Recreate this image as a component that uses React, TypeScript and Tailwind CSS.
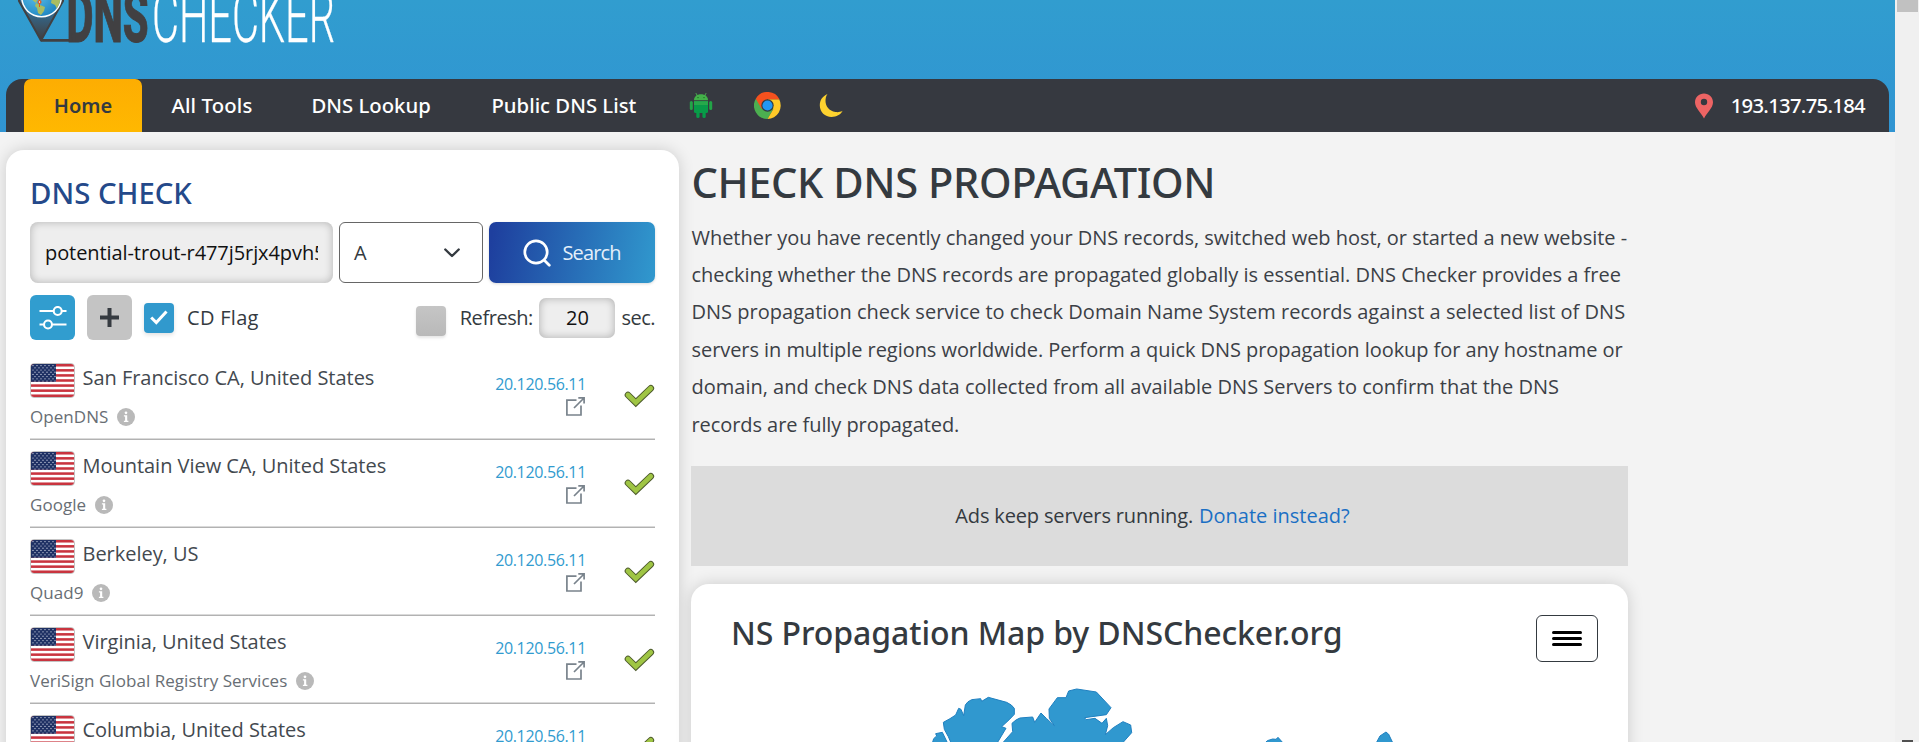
import type { ReactNode } from 'react';

type Server = { city: string; provider: string };

const servers: Server[] = [
  { city: 'San Francisco CA, United States', provider: 'OpenDNS' },
  { city: 'Mountain View CA, United States', provider: 'Google' },
  { city: 'Berkeley, US', provider: 'Quad9' },
  { city: 'Virginia, United States', provider: 'VeriSign Global Registry Services' },
  { city: 'Columbia, United States', provider: 'Speakeasy' },
];

function Logo() {
  return (
    <svg className="block" width="340" height="50" viewBox="0 0 340 50">
      <defs>
        <linearGradient id="pin" x1="0" y1="0" x2="0" y2="1">
          <stop offset="0.45" stopColor="#33688c" />
          <stop offset="0.95" stopColor="#414042" />
        </linearGradient>
        <radialGradient id="sea" cx="0.35" cy="0.4" r="0.8">
          <stop offset="0" stopColor="#5cc3ee" />
          <stop offset="1" stopColor="#1479b8" />
        </radialGradient>
        <clipPath id="globe">
          <circle cx="41.5" cy="-3" r="19" />
        </clipPath>
      </defs>
      <path d="M18 -8 L19 1 L41 40.500 L63 1 L63 -8 Z" fill="url(#pin)" stroke="#414042" strokeWidth="2" strokeLinejoin="round" />
      <path d="M41 40.400 H74" stroke="#414042" strokeWidth="2.600" />
      <circle cx="41.500" cy="-3" r="20.500" fill="#fff" />
      <circle cx="41.500" cy="-3" r="19" fill="url(#sea)" />
      <g clipPath="url(#globe)" fill="#a9bd62">
        <path d="M33 -3 L37 0 L36 3 L40 5 L45 7 L44 11 L41 15 L38 13 L37 8 L35 6 L36 3 L30 -2 Z" />
        <path d="M52 -3 L61 -3 L60 7 L57 9 L55 5 L51 3 Z" />
      </g>
      <circle cx="39.500" cy="2" r="1.400" fill="#fff" stroke="#e2571f" strokeWidth="1.300" />
      <path d="M39.500 3 V7" stroke="#e2571f" strokeWidth="1" />
      <text x="66.500" y="41.500" fontFamily="Roboto" fontWeight="800" fontSize="73" fill="#414042" stroke="#414042" strokeWidth="1" textLength="82" lengthAdjust="spacingAndGlyphs">DNS</text>
      <text x="152" y="41.500" fontFamily="Roboto" fontWeight="300" fontSize="73" fill="#fff" stroke="#fff" strokeWidth="0.300" textLength="183" lengthAdjust="spacingAndGlyphs">CHECKER</text>
    </svg>
  );
}

function AndroidIcon() {
  return (
    <svg width="24" height="27" viewBox="0 0 24 27">
      <path d="M8.500 4 L6.800 1 M15.500 4 L17.200 1" stroke="#4caf50" strokeWidth="0.900" />
      <path d="M5 8.200 C5 4.300 8 2.200 12 2.200 S19 4.300 19 8.200 Z" fill="#43b049" />
      <circle cx="9" cy="5.600" r="0.700" fill="#1b5e20" />
      <circle cx="15" cy="5.600" r="0.700" fill="#1b5e20" />
      <rect x="0.800" y="9" width="3" height="9" rx="1.500" fill="#22a447" />
      <rect x="20.200" y="9" width="3" height="9" rx="1.500" fill="#22a447" />
      <path d="M5 9.200 H19 V19.500 Q19 21 17.500 21 H6.500 Q5 21 5 19.500 Z" fill="#089b48" />
      <path d="M5 9.200 H19 V13 H5 Z" fill="#27a94b" />
      <rect x="7.300" y="19" width="3.300" height="7" rx="1.600" fill="#089b48" />
      <rect x="13.400" y="19" width="3.300" height="7" rx="1.600" fill="#089b48" />
    </svg>
  );
}

function ChromeIcon() {
  return (
    <svg width="27" height="27" viewBox="0 0 48 48">
      <path d="M24 24 L3.200 12 A24 24 0 0 0 24 48 L34.400 30 Z" fill="#4caf50" />
      <path d="M24 13 H44.800 A24 24 0 0 1 24 48 L34.400 30 Z" fill="#ffc928" />
      <path d="M24 13 H45.400 A24 24 0 0 0 3.200 12 L13.600 30 Z" fill="#f4511e" />
      <circle cx="24" cy="24" r="11" fill="#343a40" />
      <circle cx="24" cy="24" r="9" fill="#2196f3" />
    </svg>
  );
}

function MoonIcon() {
  return (
    <svg width="24" height="25" viewBox="0 0 24 25">
      <path d="M8.500 1 C3 3.500 0.800 7.500 0.800 12.500 C0.800 19 6 24 12.500 24 C17.500 24 21.500 21.800 23.600 17.800 C21 19.300 18.500 19.300 16.500 19 C10 18 6.500 13 6.500 8 C6.500 5.500 7 3 8.500 1 Z" fill="#fdd22f" />
    </svg>
  );
}

function PinIcon() {
  return (
    <svg width="18" height="26" viewBox="0 0 18 26">
      <path fillRule="evenodd" d="M9 0.500 C4 0.500 0 4.300 0 9.200 C0 15 6 19.500 9 25.500 C12 19.500 18 15 18 9.200 C18 4.300 14 0.500 9 0.500 Z M9 5.800 A3.200 3.200 0 1 1 9 12.200 A3.200 3.200 0 1 1 9 5.800 Z" fill="#ed6464" />
    </svg>
  );
}

function Flag() {
  const stripes = [0, 2, 4, 6, 8, 10, 12];
  const stars: ReactNode[] = [];
  for (let r = 0; r < 8; r++) {
    for (let c = 0; c < 6; c++) {
      stars.push(<circle key={`${r}-${c}`} cx={2 + c * 4 + (r % 2) * 2} cy={1.6 + r * 2.2} r="0.62" fill="#dfe3ee" />);
    }
  }
  return (
    <span className="block h-[35px] w-[45px] shrink-0 overflow-hidden rounded-[4px] border border-[#c4c4c4] bg-white">
      <svg className="block" width="43" height="33" viewBox="0 0 43 33">
        {stripes.map((i) => (
          <rect key={i} x="0" y={(i * 33) / 13} width="43" height={33 / 13} fill="#c9343f" />
        ))}
        <rect width="25" height="17.8" fill="#1f3164" />
        {stars}
      </svg>
    </span>
  );
}

function InfoIcon() {
  return (
    <svg width="18" height="18" viewBox="0 0 18 18">
      <circle cx="9" cy="9" r="9" fill="#b9b9b9" />
      <path d="M6.900 7.300 H10.200 V12.700 H11.400 V13.900 H6.900 V12.700 H8.100 V8.500 H6.900 Z" fill="#fff" />
      <circle cx="9" cy="4.800" r="1.350" fill="#fff" />
    </svg>
  );
}

function ExternalIcon() {
  return (
    <svg width="19" height="19" viewBox="0 0 19 19" fill="none" stroke="#79838c" strokeWidth="1.700">
      <path d="M10.500 3.200 H0.900 V18 H15 V8.500" />
      <path d="M8 11 L17.500 1.500 M12.300 0.900 H18.100 V6.600" />
    </svg>
  );
}

function CheckIcon() {
  return (
    <svg className="block" width="31" height="24" viewBox="0 0 31 24">
      <path d="M4 11 L11.800 18.600 L26.800 4.300" fill="none" stroke="#4d5a2c" strokeWidth="6.600" strokeLinecap="round" />
      <path d="M4 11 L11.800 18.600 L26.800 4.300" fill="none" stroke="#9fc544" strokeWidth="4.700" strokeLinecap="round" />
    </svg>
  );
}

function ServerRow({ city, provider }: Server) {
  return (
    <li className="flex h-[88.1px] shrink-0 justify-between border-b border-[#b2b2b2] shadow-[inset_0_-1px_0_#dadada]">
      <div className="flex flex-col pt-[11px]">
        <div className="flex items-start gap-[7.500px]">
          <Flag />
          <span className="text-[20px] leading-[30px] tracking-[-0.03px] text-[#43494f]">{city}</span>
        </div>
        <div className="mt-[7px] flex items-center gap-[8.500px]">
          <span className="text-[17px] leading-[24px] tracking-[0.04px] text-[#686e74]">{provider}</span>
          <InfoIcon />
        </div>
      </div>
      <div className="flex items-start gap-[37.500px]">
        <div className="flex flex-col items-end pt-5">
          <a className="text-[16px] leading-6 tracking-[-0.34px] text-[#319bcf]">20.120.56.11</a>
          <span className="mt-[1px] mr-[1.500px]"><ExternalIcon /></span>
        </div>
        <span className="pt-[32px] pr-[0.500px]"><CheckIcon /></span>
      </div>
    </li>
  );
}

function Header() {
  return (
    <header className="flex h-[132px] flex-col bg-linear-to-b from-[#319dcf] to-[#3094d2] px-[6px]">
      <div className="h-[79px]">
        <div className="-ml-[6px]"><Logo /></div>
      </div>
      <nav className="flex h-[53px] items-stretch rounded-t-[16px] bg-[#363940] pr-6 pl-[18px] font-['Noto_Sans'] text-[20.300px] font-medium text-white">
        <a className="flex w-[118px] items-center justify-center rounded-t-[7px] bg-linear-to-b from-[#fdad02] to-[#ffb800] text-[20px] font-semibold text-[#343a40]">Home</a>
        <a className="flex w-[140px] items-center pl-[29.500px] tracking-[0.15px]">All Tools</a>
        <a className="flex w-[180px] items-center pl-[29.500px]">DNS Lookup</a>
        <a className="flex w-[198px] items-center pl-[29.500px]">Public DNS List</a>
        <div className="flex items-center gap-[42px] pl-[29px]">
          <AndroidIcon />
          <span className="-ml-[1px]"><ChromeIcon /></span>
          <span className="-ml-[4.500px]"><MoonIcon /></span>
        </div>
        <div className="ml-auto flex items-center gap-[18px]">
          <PinIcon />
          <span className="tracking-[-0.700px]">193.137.75.184</span>
        </div>
      </nav>
    </header>
  );
}

function SearchPanel() {
  return (
    <section className="flex h-[700px] w-[673px] shrink-0 flex-col rounded-[18px] bg-white px-6 shadow-[0_0_16px_rgba(0,0,0,0.16)]">
      <h2 className="mt-[23px] h-[41px] font-['Noto_Sans'] text-[29.300px] leading-[40px] font-medium text-[#24498a]">DNS CHECK</h2>
      <div className="mt-2 flex h-[61px] gap-[6px]">
        <div className="flex w-[303px] items-center rounded-[8px] bg-[#eee] px-[15px] shadow-[inset_0_0_9px_rgba(0,0,0,0.25)]">
          <span className="w-full overflow-hidden text-[20px] leading-8 tracking-[-0.08px] whitespace-nowrap text-[#111]">potential-trout-r477j5rjx4pvh5</span>
        </div>
        <div className="flex w-[144px] items-center justify-between rounded-[6px] border border-[#666] bg-white pr-[22px] pl-[14px] text-[20px] text-[#343a40]">
          <span>A</span>
          <svg width="16" height="10" viewBox="0 0 16 10" fill="none" stroke="#343a40" strokeWidth="2.400" strokeLinecap="round" strokeLinejoin="round">
            <path d="M1.300 1.500 L8 8 L14.700 1.500" />
          </svg>
        </div>
        <button className="flex w-[166px] items-center rounded-[7px] bg-[linear-gradient(100deg,#1e3f9e_3%,#3097cd_98%)] pl-[33.500px] text-[20px] text-[#e4effa] shadow-[0_1px_3px_rgba(0,0,0,0.15)]">
          <svg width="28" height="28" viewBox="0 0 28 28" fill="none" stroke="#fff" strokeWidth="2.700" strokeLinecap="round">
            <circle cx="13" cy="13" r="11.200" />
            <path d="M21.300 21.300 L26.300 26.300" />
          </svg>
          <span className="ml-[12px] tracking-[-0.850px]">Search</span>
        </button>
      </div>
      <div className="mt-3 flex h-[45px] items-center text-[20px] text-[#343a40]">
        <button className="flex size-[45px] items-center justify-center rounded-[6px] bg-[#319dcf]">
          <svg width="28" height="24" viewBox="0 0 28 24" fill="none" stroke="#fff" strokeWidth="2.100">
            <path d="M0.500 5 H14 M23 5 H27.500 M0.500 18.500 H4.500 M13.500 18.500 H27.500" />
            <circle cx="18.700" cy="5" r="4" />
            <circle cx="9" cy="18.500" r="4" />
          </svg>
        </button>
        <button className="ml-3 flex size-[45px] items-center justify-center rounded-[6px] bg-[#c4c4c4]">
          <svg width="19" height="19" viewBox="0 0 19 19" stroke="#363b41" strokeWidth="4">
            <path d="M0 9.500 H19 M9.500 0 V19" />
          </svg>
        </button>
        <span className="ml-3 flex size-[30px] items-center justify-center rounded-[4px] bg-[#3199cd] shadow-[0_2px_4px_rgba(0,0,0,0.12)]">
          <svg width="18" height="15" viewBox="0 0 18 15" fill="none" stroke="#fff" strokeWidth="3">
            <path d="M1.200 7.500 L6.300 12.600 L16.500 1.500" />
          </svg>
        </span>
        <span className="ml-[13px] pt-[1px] tracking-[0.3px]">CD Flag</span>
        <span className="mt-[7px] ml-auto size-[30px] rounded-[4px] bg-linear-to-b from-[#c5c5c5] to-[#b9b9b9] shadow-[0_2px_3px_rgba(0,0,0,0.1)]" />
        <span className="ml-[13.500px] pt-[1px] tracking-[-0.450px]">Refresh:</span>
        <span className="ml-[6.500px] flex h-10 w-[76px] items-center justify-center rounded-[7px] bg-[#eee] pt-[1px] text-[#111] shadow-[inset_0_0_8px_rgba(0,0,0,0.28)]">20</span>
        <span className="ml-[6px] pt-[1px] tracking-[-0.500px]">sec.</span>
      </div>
      <ul className="mt-[12px] flex flex-col">
        {servers.map((s) => (
          <ServerRow key={s.city} city={s.city} provider={s.provider} />
        ))}
      </ul>
    </section>
  );
}

function MapShapes() {
  return (
    <svg className="block" width="937" height="62" viewBox="691 680 937 62">
      <g transform="translate(680 560) scale(0.33333)" fill="#3098cf" stroke="#1f80c0" strokeWidth="3" strokeLinejoin="round">
        <path d="M767 521 L787 517 L808 560 H754 L761 536 L770 528 Z" />
        <path d="M790 487 L810 476 L827 465 L836 445 L843 448 L851 467 L856 435 Q862 424 875 419 L902 416 L905 424 L925 412 L980 427 Q996 434 1003 445 V463 Q990 478 965 500 L978 505 L945 560 H818 L805 530 L793 508 Z" />
        <path d="M996 490 Q1008 478 1020 474 L1058 471 L1064 487 L1083 459 L1100 476 L1123 497 L1108 475 L1107 447 L1132 413 H1158 L1166 393 L1190 387 L1249 396 L1293 443 L1279 464 L1214 473 L1218 479 L1245 475 L1266 490 L1279 475 L1283 497 L1276 524 L1300 503 L1329 485 L1352 495 L1355 518 L1318 560 H958 L998 515 Z" />
        <path d="M1752 552 L1762 542 L1778 537 L1788 538 L1794 532 L1812 552 Z" />
        <path d="M2087 552 L2100 528 L2118 516 L2126 523 L2140 552 Z" />
      </g>
    </svg>
  );
}

function Content() {
  return (
    <section className="flex w-[937px] shrink-0 flex-col">
      <h1 className="mt-[4px] h-[56px] pl-[0.500px] font-['Noto_Sans'] text-[41.600px] leading-[56px] font-medium tracking-[-0.400px] whitespace-nowrap text-[#343a40]">CHECK DNS PROPAGATION</h1>
      <div className="mt-[8.500px] flex flex-col pl-[0.500px] text-[20px] leading-[37.400px] whitespace-nowrap text-[#3b4046]">
        <span className="tracking-[-0.035px]">Whether you have recently changed your DNS records, switched web host, or started a new website -</span>
        <span className="tracking-[-0.020px]">checking whether the DNS records are propagated globally is essential. DNS Checker provides a free</span>
        <span className="tracking-[0.015px]">DNS propagation check service to check Domain Name System records against a selected list of DNS</span>
        <span className="tracking-[-0.060px]">servers in multiple regions worldwide. Perform a quick DNS propagation lookup for any hostname or</span>
        <span className="tracking-[0.005px]">domain, and check DNS data collected from all available DNS Servers to confirm that the DNS</span>
        <span className="tracking-[-0.070px]">records are fully propagated.</span>
      </div>
      <div className="mt-auto flex h-[100px] shrink-0 items-center justify-center gap-[6px] bg-[#dcdcdc] pr-[14px] text-[20px] text-[#343a40]">
        <span className="tracking-[-0.150px]">Ads keep servers running.</span>
        <a className="text-[#1a6fc4]">Donate instead?</a>
      </div>
      <div className="mt-[18px] flex h-[266px] shrink-0 flex-col rounded-[18px] bg-white shadow-[0_0_16px_rgba(0,0,0,0.16)]">
        <div className="flex h-[96px] items-start justify-between pr-[30px] pl-[40px]">
          <h2 className="mt-[27px] font-['Noto_Sans'] text-[32px] leading-[44px] font-medium tracking-[-0.080px] whitespace-nowrap text-[#343a40]">NS Propagation Map by DNSChecker.org</h2>
          <button className="mt-[31px] flex h-[47px] w-[62px] flex-col items-center justify-center gap-[3px] rounded-[6px] border border-[#343a40]">
            <span className="h-[3px] w-[30px] rounded-full bg-black" />
            <span className="h-[3px] w-[30px] rounded-full bg-black" />
            <span className="h-[3px] w-[30px] rounded-full bg-black" />
          </button>
        </div>
        <MapShapes />
      </div>
    </section>
  );
}

export default function App() {
  return (
    <div className="flex h-[742px] w-full overflow-hidden bg-[#f3f3f3] font-['Open_Sans','Noto_Sans',sans-serif]">
      <div className="flex min-w-0 flex-1 flex-col">
        <Header />
        <main className="flex gap-[12px] pt-[18px] pl-[6px]">
          <SearchPanel />
          <Content />
        </main>
      </div>
      <aside className="flex w-6 shrink-0 flex-col items-center justify-between bg-[#f0f0f0]">
        <span className="h-3 w-[21px] bg-[#c1c1c1]" />
        <span className="h-[2px] w-[11px] bg-[#505050]" />
      </aside>
    </div>
  );
}
